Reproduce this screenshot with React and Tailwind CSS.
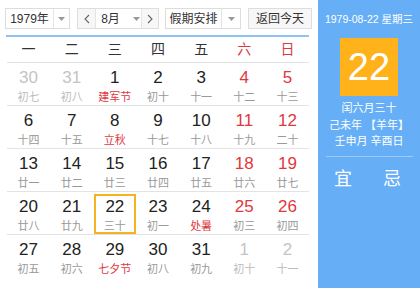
import React from "react";

const weekdays = [
  { t: "一" }, { t: "二" }, { t: "三" }, { t: "四" }, { t: "五" },
  { t: "六", red: true }, { t: "日", red: true },
];

// d: day, l: lunar text, o: other month, r: red weekend, f: festival (red lunar)
const rows = [
  [
    { d: 30, l: "初七", o: true }, { d: 31, l: "初八", o: true },
    { d: 1, l: "建军节", f: true }, { d: 2, l: "初十" }, { d: 3, l: "十一" },
    { d: 4, l: "十二", r: true }, { d: 5, l: "十三", r: true },
  ],
  [
    { d: 6, l: "十四" }, { d: 7, l: "十五" }, { d: 8, l: "立秋", f: true },
    { d: 9, l: "十七" }, { d: 10, l: "十八" },
    { d: 11, l: "十九", r: true }, { d: 12, l: "二十", r: true },
  ],
  [
    { d: 13, l: "廿一" }, { d: 14, l: "廿二" }, { d: 15, l: "廿三" },
    { d: 16, l: "廿四" }, { d: 17, l: "廿五" },
    { d: 18, l: "廿六", r: true }, { d: 19, l: "廿七", r: true },
  ],
  [
    { d: 20, l: "廿八" }, { d: 21, l: "廿九" }, { d: 22, l: "三十", sel: true },
    { d: 23, l: "初一" }, { d: 24, l: "处暑", f: true },
    { d: 25, l: "初三", r: true }, { d: 26, l: "初四", r: true },
  ],
  [
    { d: 27, l: "初五" }, { d: 28, l: "初六" }, { d: 29, l: "七夕节", f: true },
    { d: 30, l: "初八" }, { d: 31, l: "初九" },
    { d: 1, l: "初十", o: true }, { d: 2, l: "十一", o: true },
  ],
];

function Caret() {
  return (
    <svg width="7" height="4" viewBox="0 0 7 4">
      <path d="M0 0 L7 0 L3.5 4 Z" fill="#999" />
    </svg>
  );
}

function Chevron({ dir }) {
  return (
    <svg width="6" height="10" viewBox="0 0 6 10">
      <path
        d={dir === "left" ? "M5 1 L1 5 L5 9" : "M1 1 L5 5 L1 9"}
        fill="none"
        stroke="#666"
        strokeWidth="1.1"
      />
    </svg>
  );
}

function DayCell({ c }) {
  let numColor = "text-[#222]";
  if (c.o) numColor = "text-[#c4c4c4]";
  else if (c.r) numColor = "text-[#e0383e]";
  let lunarColor = "text-[#999]";
  if (c.o) lunarColor = "text-[#bbb]";
  if (c.f) lunarColor = "text-[#e0383e]";
  return (
    <div className="relative flex flex-col items-center pt-[4px]">
      {c.sel && (
        <div className="absolute left-[1px] right-0 top-[2px] bottom-0 border-2 border-[#f5b320]" />
      )}
      <div className={`text-[17px] leading-[22px] ${numColor}`}>{c.d}</div>
      <div className={`text-[11px] leading-[15px] mt-[1px] ${lunarColor}`}>{c.l}</div>
    </div>
  );
}

export default function App() {
  return (
    <div
      className="flex w-[420px] h-[288px] overflow-hidden bg-white"
      style={{ fontFamily: '"Liberation Sans", "Noto Sans CJK SC", sans-serif' }}
    >
      <div className="w-[318px] flex flex-col">
        <div className="flex items-center h-[21px] mt-[8px] ml-[5px] text-[12px] text-[#333]">
          <div className="flex h-full border border-[#ddd]">
            <div className="w-[47px] flex items-center justify-center">1979年</div>
            <div className="w-[16px] flex items-center justify-center border-l border-[#e5e5e5]">
              <Caret />
            </div>
          </div>
          <div className="flex h-full ml-[7px] border border-[#ddd]">
            <div className="w-[17px] flex items-center justify-center bg-[#f7f7f7]">
              <Chevron dir="left" />
            </div>
            <div className="w-[47px] flex items-center justify-center gap-[13px] border-x border-[#e5e5e5] pl-[4px]">
              <span>8月</span>
              <Caret />
            </div>
            <div className="w-[16px] flex items-center justify-center bg-[#f7f7f7]">
              <Chevron dir="right" />
            </div>
          </div>
          <div className="flex h-full ml-[6px] border border-[#ddd]">
            <div className="w-[55px] flex items-center justify-center">假期安排</div>
            <div className="w-[19px] flex items-center justify-center border-l border-[#e5e5e5]">
              <Caret />
            </div>
          </div>
          <div className="flex h-full w-[64px] ml-[7px] items-center justify-center border border-[#ddd] bg-[#f7f7f7]">
            返回今天
          </div>
        </div>

        <div className="mt-[6px] ml-[6px] w-[303px] h-[2px] bg-[#8fc3f3]" />

        <div className="ml-[7px] w-[302px]">
          <div className="grid grid-cols-7 h-[26px] items-center border-b border-[#e3e3e3]">
            {weekdays.map((w) => (
              <div
                key={w.t}
                className={`text-center text-[14px] ${w.red ? "text-[#e0383e]" : "text-[#333]"}`}
              >
                {w.t}
              </div>
            ))}
          </div>
          {rows.map((row, i) => (
            <div
              key={i}
              className={`grid grid-cols-7 h-[43px] ${i < rows.length - 1 ? "border-b border-[#e3e3e3]" : ""}`}
            >
              {row.map((c, j) => (
                <DayCell key={j} c={c} />
              ))}
            </div>
          ))}
        </div>
      </div>

      <div className="w-[102px] bg-[#66aff7] flex flex-col items-center text-white">
        <div className="mt-[12px] text-[10.5px] leading-[14px] whitespace-nowrap">1979-08-22 星期三</div>
        <div className="mt-[12px] w-[58px] h-[58px] bg-[#ffb219] flex items-center justify-center text-[38px] leading-none">
          22
        </div>
        <div className="mt-[4px] text-[11px] leading-[16.5px] text-center">
          <div>闰六月三十</div>
          <div>己未年 【羊年】</div>
          <div>壬申月 辛酉日</div>
        </div>
        <div className="mt-[6px] w-[87px] h-px bg-[#9ccbf8]" />
        <div className="mt-[12px] w-full flex justify-between pl-[16px] pr-[19px] text-[18px] leading-[20px]">
          <span>宜</span>
          <span>忌</span>
        </div>
      </div>
    </div>
  );
}
